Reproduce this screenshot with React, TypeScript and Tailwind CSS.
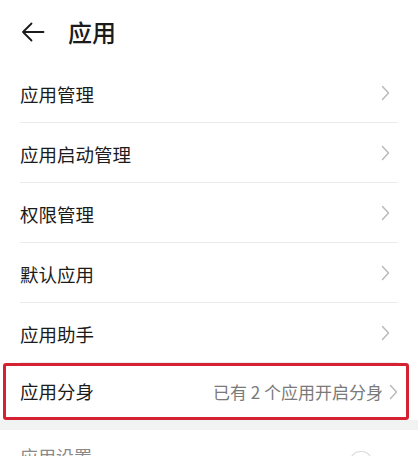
const font = { fontFamily: '"Noto Sans CJK SC", "Noto Sans", sans-serif' };

function Chevron() {
  return (
    <svg width="9" height="16" viewBox="0 0 9 16" fill="none" className="shrink-0">
      <path d="M1.5 1.5 L7.5 8 L1.5 14.5" stroke="#b8b8b8" strokeWidth="1.4" strokeLinecap="round" strokeLinejoin="round" />
    </svg>
  );
}

const items = ["应用管理", "应用启动管理", "权限管理", "默认应用", "应用助手"];

export default function App() {
  return (
    <div className="w-[418px] h-[456px] overflow-hidden bg-white text-[#1b1b1b]" style={font}>
      <div className="h-[63px] flex items-center pl-[21px]">
        <svg width="24" height="20" viewBox="0 0 24 20" fill="none">
          <path d="M22.5 10 H2 M10.5 1.5 L2 10 L10.5 18.5" stroke="#1b1b1b" strokeWidth="1.8" strokeLinecap="round" strokeLinejoin="round" />
        </svg>
        <span className="ml-[23px] text-[24px] font-medium leading-none">应用</span>
      </div>

      <div className="px-[20px]">
        {items.map((t) => (
          <div key={t} className="h-[60px] flex items-center justify-between border-b border-[#ececec] pr-[8px]">
            <span className="text-[18.5px] leading-none pt-[4px]">{t}</span>
            <Chevron />
          </div>
        ))}
      </div>

      <div className="mx-[3px] w-[406px] h-[57px] border-[3px] border-[#d52232] rounded-[3px] flex items-center justify-between pl-[14px] pr-[8px]">
        <span className="text-[18.5px] leading-none">应用分身</span>
        <div className="flex items-center gap-[6px]">
          <span className="text-[17px] leading-none text-[#7a7a7a]">已有 2 个应用开启分身</span>
          <Chevron />
        </div>
      </div>

      <div className="h-[10px] bg-[#f1f3f2]" />

      <div className="flex items-start justify-between pl-[20px] pr-[46px] pt-[17px]">
        <span className="text-[18px] leading-none text-[#8a8a8a]">应用设置</span>
        <span className="w-[22px] h-[10px] mt-[4px] rounded-t-full border-t border-x border-[#d8d8d8]" />
      </div>
    </div>
  );
}
